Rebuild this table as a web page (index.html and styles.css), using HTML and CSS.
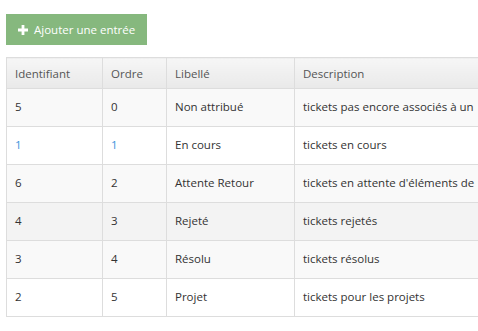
FILE: index.html
```html
<!DOCTYPE html>
<html lang="fr">
<head>
    <meta charset="UTF-8">
    <title>Statuts</title>
    <link rel="stylesheet" href="styles.css">
</head>
<body>
    <div class="toolbar">
        <button class="btn-add">
            <svg class="icon-plus" width="10" height="10" viewBox="0 0 10 10"><path d="M3.6 0h2.8v3.6H10v2.8H6.4V10H3.6V6.4H0V3.6h3.6z" fill="#fff"/></svg>
            Ajouter une entrée
        </button>
    </div>

    <table class="data-table">
        <thead>
            <tr>
                <th class="col-id">Identifiant</th>
                <th class="col-order">Ordre</th>
                <th class="col-label">Libellé</th>
                <th>Description</th>
            </tr>
        </thead>
        <tbody>
            <tr class="striped">
                <td>5</td><td>0</td><td>Non attribué</td><td>tickets pas encore associés à un</td>
            </tr>
            <tr class="selected">
                <td>1</td><td>1</td><td>En cours</td><td>tickets en cours</td>
            </tr>
            <tr class="striped">
                <td>6</td><td>2</td><td>Attente Retour</td><td>tickets en attente d'éléments de</td>
            </tr>
            <tr class="hovered">
                <td>4</td><td>3</td><td>Rejeté</td><td>tickets rejetés</td>
            </tr>
            <tr class="striped">
                <td>3</td><td>4</td><td>Résolu</td><td>tickets résolus</td>
            </tr>
            <tr>
                <td>2</td><td>5</td><td>Projet</td><td>tickets pour les projets</td>
            </tr>
        </tbody>
    </table>
</body>
</html>
```

FILE: styles.css
```css
/* --- base --- */
* {
    box-sizing: border-box;
}

body {
    margin: 0;
    padding: 14px 6px;
    font-family: 'Open Sans', 'Liberation Sans', sans-serif;
    font-size: 11.5px;
    color: #333;
    background: #fff;
    overflow: hidden;
}

/* --- bouton d'ajout --- */
.toolbar {
    margin-bottom: 12px;
}

.btn-add {
    display: flex;
    align-items: center;
    gap: 6px;
    width: 141px;
    height: 31px;
    padding: 0 0 0 12px;
    border: none;
    border-radius: 0;
    background-color: #86b87e;
    color: #fff;
    font-family: 'Open Sans', 'Liberation Sans', sans-serif;
    font-size: 11.5px;
    cursor: pointer;
}

/* --- tableau --- */
.data-table {
    width: 620px;
    border-collapse: collapse;
    border: 1px solid #ddd;
    table-layout: fixed;
}

.data-table th,
.data-table td {
    border: 1px solid #ddd;
    padding: 0 8px;
    text-align: left;
    white-space: nowrap;
    overflow: hidden;
}

.data-table th {
    height: 31px;
    font-weight: normal;
    color: #555;
    background: linear-gradient(#f6f6f6, #e9e9e9);
}

.data-table td {
    height: 38px;
    padding-bottom: 3px;
}

.col-id { width: 96px; }
.col-order { width: 64px; }
.col-label { width: 128px; }

.data-table tr.striped td {
    background-color: #f9f9f9;
}

.data-table tr.hovered td {
    background-color: #f3f3f3;
}

.data-table tr.selected td:nth-child(1),
.data-table tr.selected td:nth-child(2) {
    color: #3c94dc;
}
```
